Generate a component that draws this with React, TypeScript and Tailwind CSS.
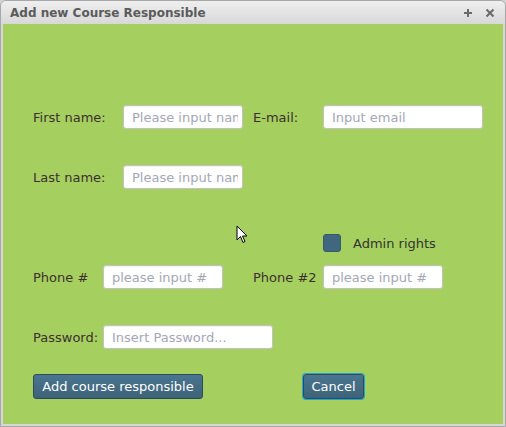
const font = { fontFamily: '"DejaVu Sans", Verdana, sans-serif' };

const Field = ({ placeholder, width }: { placeholder: string; width: string }) => (
  <input
    type="text"
    placeholder={placeholder}
    className={`${width} h-[24px] rounded-[3px] border border-[#c2c2c2] bg-white pl-[8px] pr-[4px] text-[13px] text-[#333] outline-none placeholder:text-[#a6a6b6] shadow-[inset_0_1px_1px_rgba(0,0,0,0.06)]`}
  />
);

const Label = ({ text, width }: { text: string; width: string }) => (
  <span className={`${width} shrink-0 pt-[2px] text-[13px] leading-[16px] text-[#3d2f2f]`}>{text}</span>
);

export default function App() {
  return (
    <div style={font} className="w-[506px] h-[427px] overflow-hidden bg-[#d3d3d3]">
      <div className="flex h-full flex-col rounded-t-[6px] border border-[#a8a8a8] bg-[#d6d6d6]">
        {/* title bar */}
        <div className="flex h-[23px] shrink-0 items-center justify-between rounded-t-[5px] bg-gradient-to-b from-[#efefef] to-[#d8d8d8] pl-[9px] pr-[10px]">
          <span className="text-[12px] font-bold text-[#5b5b5b]">Add new Course Responsible</span>
          <div className="flex items-center gap-[12px] text-[#6a6a6a]">
            <svg width="10" height="10" viewBox="0 0 10 10">
              <path d="M5 1v8M1 5h8" stroke="#6a6a6a" strokeWidth="2" />
            </svg>
            <svg width="10" height="10" viewBox="0 0 10 10">
              <path d="M1.5 1.5l7 7M8.5 1.5l-7 7" stroke="#6a6a6a" strokeWidth="2" />
            </svg>
          </div>
        </div>

        {/* content */}
        <div className="relative mx-[2px] mb-[2px] flex flex-1 flex-col bg-[#a5cf5f] pl-[30px]">
          <div className="mt-[81px] flex items-center">
            <Label text="First name:" width="w-[90px]" />
            <Field placeholder="Please input name" width="w-[120px]" />
            <span className="w-[10px]" />
            <Label text="E-mail:" width="w-[70px]" />
            <Field placeholder="Input email" width="w-[160px]" />
          </div>

          <div className="mt-[36px] flex items-center">
            <Label text="Last name:" width="w-[90px]" />
            <Field placeholder="Please input name" width="w-[120px]" />
          </div>

          <div className="mt-[45px] ml-[290px] flex h-[18px] items-center gap-[12px]">
            <span className="h-[18px] w-[18px] rounded-[3px] border border-[#355a6e] bg-[#40677f]" />
            <span className="pt-[2px] text-[13px] leading-[16px] text-[#333]">Admin rights</span>
          </div>

          <div className="mt-[13px] flex items-center">
            <Label text="Phone #" width="w-[70px]" />
            <Field placeholder="please input #" width="w-[120px]" />
            <span className="w-[30px]" />
            <Label text="Phone #2" width="w-[70px]" />
            <Field placeholder="please input #" width="w-[120px]" />
          </div>

          <div className="mt-[36px] flex items-center">
            <Label text="Password:" width="w-[70px]" />
            <Field placeholder="Insert Password..." width="w-[170px]" />
          </div>

          <div className="mt-[25px] flex items-center">
            <button className="h-[25px] w-[170px] rounded-[3px] border border-[#2d4b5c] bg-gradient-to-b from-[#4a7590] to-[#3d6378] text-[13px] text-white">
              Add course responsible
            </button>
            <span className="w-[100px]" />
            <button className="h-[25px] w-[61px] rounded-[3px] border border-[#2d4b5c] bg-gradient-to-b from-[#4a7590] to-[#3d6378] text-[13px] text-white shadow-[0_0_0_1px_#1fa6d8]">
              Cancel
            </button>
          </div>

          {/* mouse pointer */}
          <svg className="absolute left-[233px] top-[201px]" width="12" height="19" viewBox="0 0 12 19">
            <path d="M1 1v14l3.5-3.5 2.5 6 2-1-2.5-5.5H11z" fill="#fff" stroke="#000" strokeWidth="1" />
          </svg>
        </div>
      </div>
    </div>
  );
}
